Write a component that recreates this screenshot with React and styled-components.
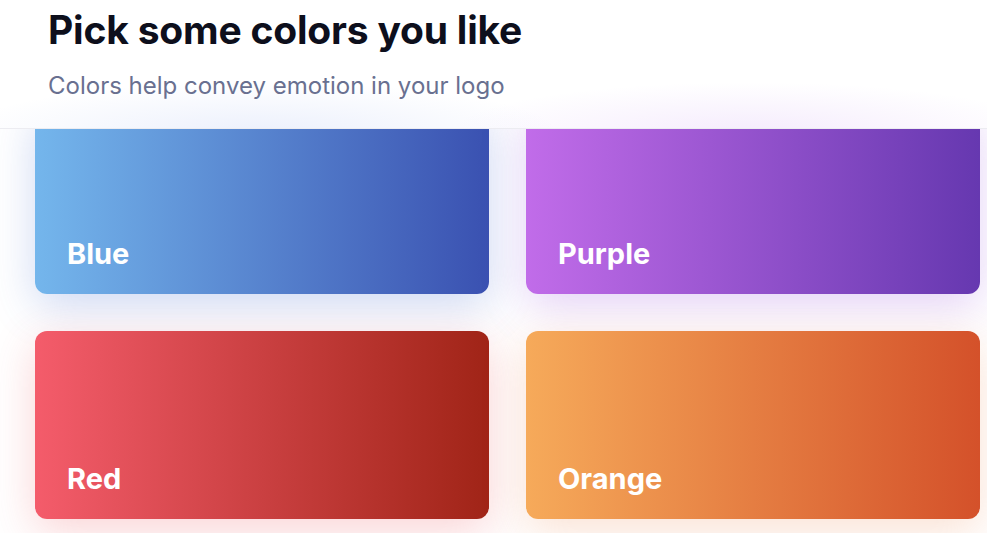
import React, { useEffect, useRef } from 'react';
import styled, { createGlobalStyle } from 'styled-components';

const GlobalStyle = createGlobalStyle`
  html, body {
    margin: 0;
    padding: 0;
    background: #ffffff;
    font-family: Inter, "Liberation Sans", sans-serif;
  }
`;

const colors = [
  { name: 'Blue', from: '#74b6ec', to: '#3a51b1', glow: 'rgba(70, 110, 210, 0.26)' },
  { name: 'Purple', from: '#c16ce9', to: '#6638b0', glow: 'rgba(150, 80, 220, 0.26)' },
  { name: 'Red', from: '#f45c6b', to: '#a02417', glow: 'rgba(235, 70, 80, 0.24)' },
  { name: 'Orange', from: '#f6aa5a', to: '#d4512a', glow: 'rgba(235, 130, 70, 0.24)' },
];

export default function App() {
  const scrollRef = useRef(null);

  useEffect(() => {
    if (scrollRef.current) scrollRef.current.scrollTop = 60;
  }, []);

  return (
    <>
      <GlobalStyle />
      <Page ref={scrollRef}>
        <Header>
          <Title>Pick some colors you like</Title>
          <Subtitle>Colors help convey emotion in your logo</Subtitle>
        </Header>
        <Grid>
          {colors.map((c) => (
            <Card key={c.name} $from={c.from} $to={c.to} $glow={c.glow}>
              <Label>{c.name}</Label>
            </Card>
          ))}
        </Grid>
      </Page>
    </>
  );
}

const Page = styled.div`
  height: 533px;
  overflow-y: auto;
  scrollbar-width: none;
  &::-webkit-scrollbar {
    display: none;
  }
`;

const Header = styled.header`
  position: sticky;
  top: 0;
  z-index: 2;
  height: 128px;
  box-sizing: content-box;
  padding: 0 48px;
  background:
    radial-gradient(ellipse 300px 50px at 260px 132px, rgba(120, 150, 235, 0.14), transparent),
    radial-gradient(ellipse 300px 50px at 750px 132px, rgba(185, 120, 240, 0.14), transparent),
    #ffffff;
  border-bottom: 1px solid #ececf1;
`;

const Title = styled.h1`
  margin: 0;
  padding-top: 5px;
  font-size: 39px;
  line-height: 50px;
  font-weight: 700;
  letter-spacing: -0.2px;
  color: #0d0f1c;
`;

const Subtitle = styled.p`
  margin: 15px 0 0;
  font-size: 24px;
  line-height: 32px;
  font-weight: 400;
  color: #697090;
`;

const Grid = styled.div`
  display: grid;
  grid-template-columns: 454px 454px;
  gap: 37px;
  padding: 37px 0 80px 35px;
`;

const Card = styled.div`
  height: 188px;
  border-radius: 12px;
  background: linear-gradient(90deg, ${(p) => p.$from}, ${(p) => p.$to});
  box-shadow: 0 12px 44px ${(p) => p.$glow};
  display: flex;
  align-items: flex-end;
  padding: 0 32px 20px;
  box-sizing: border-box;
`;

const Label = styled.span`
  font-size: 29px;
  line-height: 40px;
  font-weight: 700;
  color: #ffffff;
`;
